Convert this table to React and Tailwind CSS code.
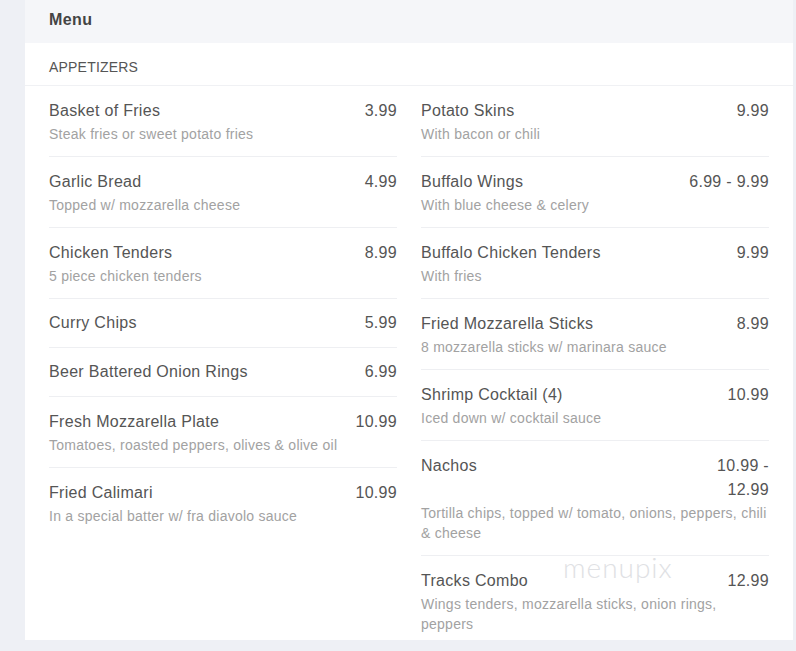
import React from 'react';

const left = [
  { name: 'Basket of Fries', price: '3.99', desc: 'Steak fries or sweet potato fries' },
  { name: 'Garlic Bread', price: '4.99', desc: 'Topped w/ mozzarella cheese' },
  { name: 'Chicken Tenders', price: '8.99', desc: '5 piece chicken tenders' },
  { name: 'Curry Chips', price: '5.99' },
  { name: 'Beer Battered Onion Rings', price: '6.99' },
  { name: 'Fresh Mozzarella Plate', price: '10.99', desc: 'Tomatoes, roasted peppers, olives & olive oil' },
  { name: 'Fried Calimari', price: '10.99', desc: 'In a special batter w/ fra diavolo sauce' },
];

const right = [
  { name: 'Potato Skins', price: '9.99', desc: 'With bacon or chili' },
  { name: 'Buffalo Wings', price: '6.99 - 9.99', desc: 'With blue cheese & celery' },
  { name: 'Buffalo Chicken Tenders', price: '9.99', desc: 'With fries' },
  { name: 'Fried Mozzarella Sticks', price: '8.99', desc: '8 mozzarella sticks w/ marinara sauce' },
  { name: 'Shrimp Cocktail (4)', price: '10.99', desc: 'Iced down w/ cocktail sauce' },
  { name: 'Nachos', price: '10.99 - 12.99', desc: 'Tortilla chips, topped w/ tomato, onions, peppers, chili & cheese' },
  { name: 'Tracks Combo', price: '12.99', desc: 'Wings tenders, mozzarella sticks, onion rings, peppers' },
];

const Item = ({ item, last }) => {
  const pad = item.desc ? 'pt-[13px]' : 'pt-[12px]';
  const bottom = last ? 'pb-[6px]' : item.desc ? 'pb-[12px] border-b border-[#eeeff2]' : 'pb-[12px] border-b border-[#eeeff2]';
  return (
    <div className={`${pad} ${bottom}`}>
      <div className="flex justify-between gap-4 text-[16px] leading-6 text-[#555] tracking-[0.3px]">
        <span>{item.name}</span>
        <span className="text-right max-w-[92px]">{item.price}</span>
      </div>
      {item.desc && (
        <p className="mt-px text-[14px] leading-5 text-[#a2a2a2] tracking-[0.25px]">{item.desc}</p>
      )}
    </div>
  );
};

const Column = ({ items }) => (
  <div className="flex flex-col">
    {items.map((it, i) => (
      <Item key={it.name} item={it} last={i === items.length - 1} />
    ))}
  </div>
);

export default function App() {
  return (
    <div className="min-h-[651px] bg-[#eef0f5] pl-[25px] pr-[3px] font-['Liberation_Sans',Arial,sans-serif]">
      <div className="bg-white relative">
        <div className="h-[43px] bg-[#f5f6f9] px-6 pt-[10px]">
          <h1 className="text-[16px] leading-5 font-bold text-[#444] tracking-[0.4px]">Menu</h1>
        </div>
        <div className="h-[43px] px-6 pt-[14px] border-b border-[#f0f1f4]">
          <h2 className="text-[14px] leading-5 uppercase text-[#555] tracking-[0.2px]">Appetizers</h2>
        </div>
        <div className="grid grid-cols-2 gap-6 px-6">
          <Column items={left} />
          <Column items={right} />
        </div>
        <span className="absolute left-[538px] top-[551px] text-[28px] leading-8 font-light text-[#e0e1e4] tracking-[1px] font-['Lato',sans-serif] select-none">
          menupix
        </span>
      </div>
    </div>
  );
}
